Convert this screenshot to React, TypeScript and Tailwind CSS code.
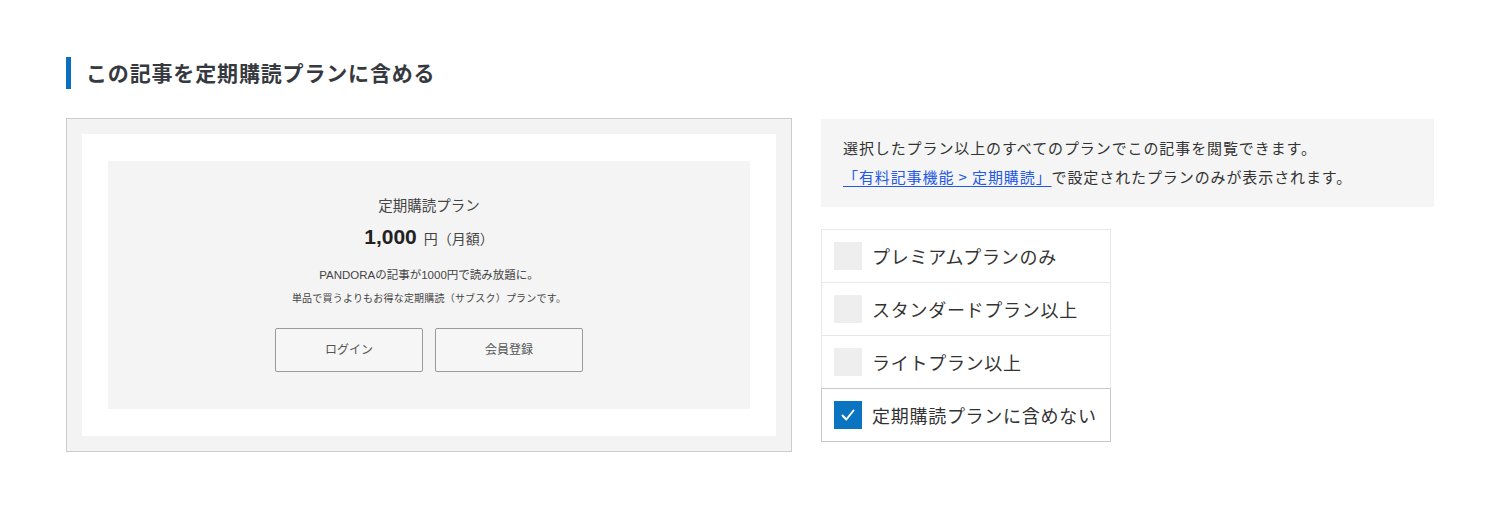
import React, { useState } from 'react';

const plans = [
    { id: 'premium', label: 'プレミアムプランのみ' },
    { id: 'standard', label: 'スタンダードプラン以上' },
    { id: 'light', label: 'ライトプラン以上' },
    { id: 'none', label: '定期購読プランに含めない' },
];

const PreviewCard: React.FC = () => (
    <div className="w-[726px] h-[334px] border border-[#cdcdcd] bg-[#f3f3f3] p-[15px] shrink-0">
        <div className="h-full bg-white px-[26px] py-[27px]">
            <div className="h-full bg-[#f4f4f4] flex flex-col items-center pt-[35px] text-[#444]" style={{ fontFamily: '"Liberation Sans", "Noto Sans CJK JP", sans-serif' }}>
                <p className="text-[14.5px] leading-[20px]">定期購読プラン</p>
                <p className="mt-[7px] leading-[28px] text-[#222]">
                    <span className="text-[21px] font-bold">1,000</span>
                    <span className="text-[14px] ml-[7px] text-[#444]">円（月額）</span>
                </p>
                <p className="mt-[10px] text-[11.5px] leading-[24px]">PANDORAの記事が1000円で読み放題に。</p>
                <p className="text-[10px] tracking-[0.02em] leading-[24px]">単品で買うよりもお得な定期購読（サブスク）プランです。</p>
                <div className="mt-[17px] flex gap-[12px]">
                    <button className="w-[148px] h-[44px] border border-[#9a9a9a] rounded-[2px] bg-[#f6f6f6] text-[12px] text-[#555]">ログイン</button>
                    <button className="w-[148px] h-[44px] border border-[#9a9a9a] rounded-[2px] bg-[#f6f6f6] text-[12px] text-[#555]">会員登録</button>
                </div>
            </div>
        </div>
    </div>
);

export default function App() {
    const [selected, setSelected] = useState('none');

    return (
        <div className="min-h-[518px] bg-white pl-[66px] pt-[57px] text-[#333]" style={{ fontFamily: '"Noto Sans CJK JP", "Noto Sans", sans-serif' }}>
            <h2 className="border-l-[5px] border-[#0a6fbf] pl-[15px] h-[32px] flex items-center text-[21px] font-bold tracking-[0.04em] text-[#363a40]">
                この記事を定期購読プランに含める
            </h2>
            <div className="mt-[29px] flex gap-[29px]">
                <PreviewCard />
                <div className="w-[613px] pt-px">
                    <div className="bg-[#f5f5f5] pl-[22px] pt-[14px] pb-[16px] text-[15px] leading-[29px] tracking-[0.06em] text-[#333]">
                        <p>選択したプラン以上のすべてのプランでこの記事を閲覧できます。</p>
                        <p>
                            <a href="#" className="text-[#2458e6] underline underline-offset-[3px]">「有料記事機能 &gt; 定期購読」</a>
                            で設定されたプランのみが表示されます。
                        </p>
                    </div>
                    <div className="mt-[22px] w-[290px] flex flex-col">
                        {plans.map((p, i) => {
                            const checked = selected === p.id;
                            return (
                                <label
                                    key={p.id}
                                    onClick={() => setSelected(p.id)}
                                    className={`relative flex items-center h-[54px] pl-[12px] border cursor-pointer ${i > 0 ? '-mt-px' : ''} ${checked ? 'border-[#c9c9c9] z-10' : 'border-[#e8e8e8]'}`}
                                >
                                    <span className={`w-[28px] h-[28px] flex items-center justify-center shrink-0 ${checked ? 'bg-[#0a74c0]' : 'bg-[#eeeeee]'}`}>
                                        {checked && (
                                            <svg width="18" height="18" viewBox="0 0 18 18" fill="none">
                                                <path d="M3.5 9.5l3.8 4L14.5 4.5" stroke="white" strokeWidth="2" strokeLinecap="round" strokeLinejoin="round" />
                                            </svg>
                                        )}
                                    </span>
                                    <span className="ml-[10px] text-[18px] tracking-[0.04em] text-[#333]">{p.label}</span>
                                </label>
                            );
                        })}
                    </div>
                </div>
            </div>
        </div>
    );
}
